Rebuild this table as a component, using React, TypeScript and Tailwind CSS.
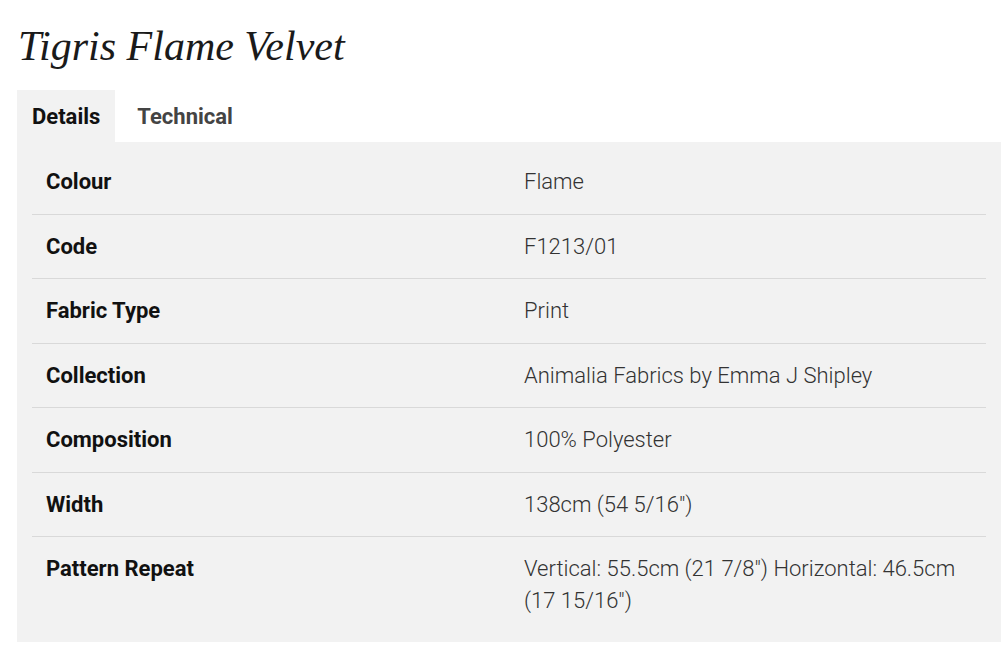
import React from "react";

const rows: [string, string][] = [
  ["Colour", "Flame"],
  ["Code", "F1213/01"],
  ["Fabric Type", "Print"],
  ["Collection", "Animalia Fabrics by Emma J Shipley"],
  ["Composition", "100% Polyester"],
  ["Width", "138cm (54 5/16\")"],
  ["Pattern Repeat", "Vertical: 55.5cm (21 7/8\u2033) Horizontal: 46.5cm (17 15/16\u2033)"],
];

export default function App() {
  return (
    <div className="w-[1005px] h-[660px] bg-white pl-[17px] pr-[4px] pt-[22px]">
      <h1 className="text-[42px] leading-[48px] italic text-[#1a1a1a] pl-px font-['Liberation_Serif',serif]">
        Tigris Flame Velvet
      </h1>
      <div className="mt-[20px] flex font-['Roboto',sans-serif] text-[22px]">
        <div className="bg-[#f2f2f2] h-[52px] px-[15px] flex items-center font-bold text-[#111]">
          Details
        </div>
        <div className="h-[52px] pl-[22px] pr-[15px] flex items-center font-bold text-[#444]">
          Technical
        </div>
      </div>
      <div className="bg-[#f2f2f2] px-[15px] pt-[8px] pb-[10px] font-['Roboto',sans-serif] text-[22px] text-[#222]">
        {rows.map(([k, v], i) => (
          <div
            key={k}
            className={
              "grid grid-cols-2 " +
              (i < rows.length - 1 ? "border-b border-[#d9d9d9]" : "")
            }
          >
            <div className="px-[14px] py-[16px] leading-[31.5px] font-bold text-[#111]">{k}</div>
            <div className="pl-[15px] pr-[14px] py-[16px] leading-[31.5px] font-light text-[#333]">{v}</div>
          </div>
        ))}
      </div>
    </div>
  );
}
